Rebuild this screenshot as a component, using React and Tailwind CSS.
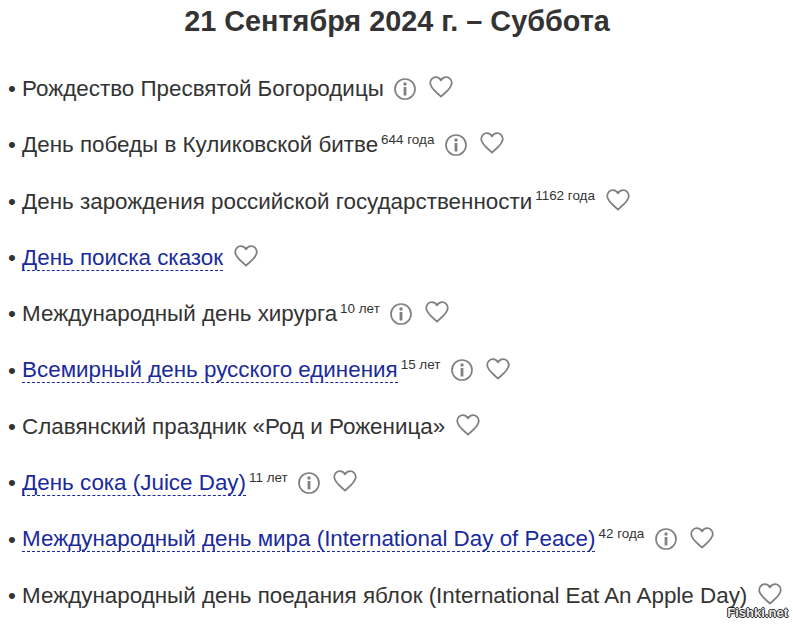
const items = [
  { text: "Рождество Пресвятой Богородицы", info: true },
  { text: "День победы в Куликовской битве", age: "644 года", info: true },
  { text: "День зарождения российской государственности", age: "1162 года" },
  { text: "День поиска сказок", link: true },
  { text: "Международный день хирурга", age: "10 лет", info: true },
  { text: "Всемирный день русского единения", link: true, age: "15 лет", info: true },
  { text: "Славянский праздник «Род и Роженица»" },
  { text: "День сока (Juice Day)", link: true, age: "11 лет", info: true },
  { text: "Международный день мира (International Day of Peace)", link: true, age: "42 года", info: true },
  { text: "Международный день поедания яблок (International Eat An Apple Day)" },
];

function InfoIcon() {
  return (
    <svg width="22" height="22" viewBox="0 0 22 22" className="ml-[10.5px] shrink-0" fill="none">
      <circle cx="11" cy="11" r="10" stroke="#808080" strokeWidth="1.7" />
      <rect x="9.6" y="9" width="2.8" height="8.5" fill="#808080" />
      <circle cx="11" cy="6" r="1.7" fill="#808080" />
    </svg>
  );
}

function HeartIcon({ after }) {
  return (
    <svg
      width="24"
      height="22"
      viewBox="0 0 24 22"
      className={after ? "mb-[3px] ml-[13px] shrink-0" : "mb-[3px] ml-[11px] shrink-0"}
      fill="none"
    >
      <path
        d="M12 20.5 C9 17.5 1.2 12.5 1.2 7 C1.2 3.6 3.8 1.2 6.8 1.2 C9 1.2 11 2.4 12 4.4 C13 2.4 15 1.2 17.2 1.2 C20.2 1.2 22.8 3.6 22.8 7 C22.8 12.5 15 17.5 12 20.5 Z"
        stroke="#808080"
        strokeWidth="1.8"
        strokeLinejoin="round"
      />
    </svg>
  );
}

export default function App() {
  return (
    <div className="relative h-[625px] w-[793px] overflow-hidden bg-white font-['Liberation_Sans',Arial,sans-serif] text-[#333]">
      <h1 className="pt-[3px] pl-[1px] text-center text-[28.8px] leading-[36px] font-bold">21 Сентября 2024 г. – Суббота</h1>
      <ul className="mt-[21.5px] pl-[8px]">
        {items.map((item) => (
          <li key={item.text} className="flex h-[56.3px] items-center text-[22.4px] whitespace-pre">
            <span className="leading-[25px]">{"• "}</span>
            {item.link ? (
              <span className="border-b border-dashed border-[#1a2a9c] leading-[25px] text-[#1a2a9c]">{item.text}</span>
            ) : (
              <span className="leading-[25px]">{item.text}</span>
            )}
            {item.age && <span className="mb-[10px] ml-[3px] text-[13.44px] leading-[14px]">{item.age}</span>}
            {item.info && <InfoIcon />}
            <HeartIcon after={item.info} />
          </li>
        ))}
      </ul>
      <div className="absolute right-[5px] bottom-[5px] text-[13px] leading-[14px] font-bold text-[#eee] [text-shadow:1px_0_0_#222,-1px_0_0_#222,0_1px_0_#222,0_-1px_0_#222]">
        Fishki.net
      </div>
    </div>
  );
}
